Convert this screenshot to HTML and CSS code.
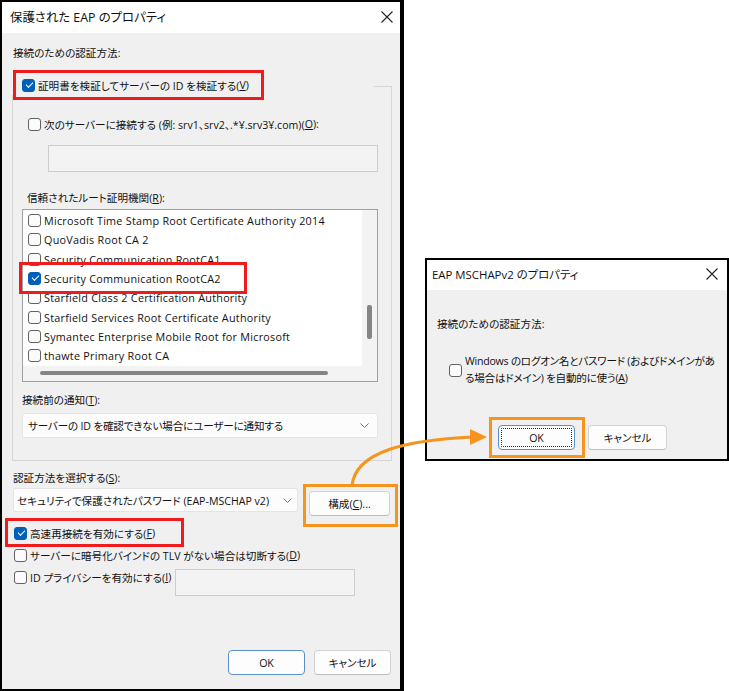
FILE: index.html
```html
<!DOCTYPE html>
<html lang="ja">
<head>
    <meta charset="UTF-8">
    <title>保護された EAP のプロパティ</title>
    <link rel="stylesheet" href="styles.css">
</head>
<body>
<div class="canvas">

    <!-- PEAP properties window -->
    <div class="window peap">
        <div class="titlebar">
            <span class="title">保護された EAP のプロパティ</span>
            <svg class="close" width="12" height="12" viewBox="0 0 12 12"><path d="M0.5 0.5 L11.5 11.5 M11.5 0.5 L0.5 11.5" stroke="#222" stroke-width="1.1"/></svg>
        </div>
        <div class="client">
            <div class="label first-label">接続のための認証方法:</div>

            <div class="group">
                <div class="legend"><span class="cb checked"></span>証明書を検証してサーバーの ID を検証する(<u>V</u>)</div>
                <div class="check-row server-row"><span class="cb"></span>次のサーバーに接続する (例: srv1、srv2、.*¥.srv3¥.com)(<u>O</u>):</div>
                <div class="textbox server-box"></div>

                <div class="label ca-label">信頼されたルート証明機関(<u>R</u>):</div>
                <div class="listbox">
                    <div class="list-items">
                        <div class="item"><span class="cb"></span>Microsoft Time Stamp Root Certificate Authority 2014</div>
                        <div class="item"><span class="cb"></span>QuoVadis Root CA 2</div>
                        <div class="item"><span class="cb"></span>Security Communication RootCA1</div>
                        <div class="item"><span class="cb checked"></span>Security Communication RootCA2</div>
                        <div class="item"><span class="cb"></span>Starfield Class 2 Certification Authority</div>
                        <div class="item"><span class="cb"></span>Starfield Services Root Certificate Authority</div>
                        <div class="item"><span class="cb"></span>Symantec Enterprise Mobile Root for Microsoft</div>
                        <div class="item"><span class="cb"></span>thawte Primary Root CA</div>
                    </div>
                    <div class="vscroll"><div class="thumb"></div></div>
                    <div class="hscroll"><div class="thumb"></div></div>
                    <div class="corner"></div>
                </div>

                <div class="label notify-label">接続前の通知(<u>T</u>):</div>
                <div class="combo notify-combo">
                    <span>サーバーの ID を確認できない場合にユーザーに通知する</span>
                    <svg width="9" height="5" viewBox="0 0 9 5"><path d="M0.5 0.5 L4.5 4.5 L8.5 0.5" fill="none" stroke="#777" stroke-width="1"/></svg>
                </div>
            </div>

            <div class="label auth-label">認証方法を選択する(<u>S</u>):</div>
            <div class="auth-row">
                <div class="combo auth-combo">
                    <span>セキュリティで保護されたパスワード (EAP-MSCHAP v2)</span>
                    <svg width="9" height="5" viewBox="0 0 9 5"><path d="M0.5 0.5 L4.5 4.5 L8.5 0.5" fill="none" stroke="#777" stroke-width="1"/></svg>
                </div>
                <div class="button config-btn">構成(<u>C</u>)...</div>
            </div>

            <div class="check-row opt-row"><span class="cb checked"></span>高速再接続を有効にする(<u>F</u>)</div>
            <div class="check-row opt-row"><span class="cb"></span>サーバーに暗号化バインドの TLV がない場合は切断する(<u>D</u>)</div>
            <div class="privacy-row">
                <div class="check-row opt-row privacy-label"><span class="cb"></span>ID プライバシーを有効にする(<u>I</u>)</div>
                <div class="textbox privacy-box"></div>
            </div>

            <div class="footer">
                <div class="button default">OK</div>
                <div class="button">キャンセル</div>
            </div>
        </div>
    </div>

    <!-- MSCHAPv2 properties window -->
    <div class="window mschap">
        <div class="titlebar">
            <span class="title">EAP MSCHAPv2 のプロパティ</span>
            <svg class="close" width="12" height="12" viewBox="0 0 12 12"><path d="M0.5 0.5 L11.5 11.5 M11.5 0.5 L0.5 11.5" stroke="#222" stroke-width="1.1"/></svg>
        </div>
        <div class="client">
            <div class="label mschap-label">接続のための認証方法:</div>
            <div class="check-row logon-row"><span class="cb"></span><span class="logon-text">Windows のログオン名とパスワード (およびドメインがあ<br>る場合はドメイン) を自動的に使う(<u>A</u>)</span></div>
            <div class="mschap-buttons">
                <div class="button default focused">OK</div>
                <div class="button">キャンセル</div>
            </div>
        </div>
    </div>

    <!-- annotation marks -->
    <div class="mark red" style="left:13px; top:70px; width:251px; height:30px;"></div>
    <div class="mark red" style="left:19px; top:262px; width:228px; height:32px;"></div>
    <div class="mark red" style="left:5px; top:518px; width:179px; height:29px;"></div>
    <div class="mark orange" style="left:303px; top:484px; width:95px; height:43px;"></div>
    <div class="mark orange" style="left:489px; top:417px; width:96px; height:41px;"></div>

    <svg class="arrow" width="729" height="691" viewBox="0 0 729 691">
        <path d="M352 486 C355 451 408 440 473 437" fill="none" stroke="#f7941d" stroke-width="3"/>
        <path d="M470 429 L487 437 L470 445 Z" fill="#f7941d"/>
    </svg>
</div>
</body>
</html>
```

FILE: styles.css
```css
* {
    box-sizing: border-box;
}

body {
    margin: 0;
    background: #fff;
    font-family: "Open Sans", "Noto Sans CJK JP", sans-serif;
    font-size: 10.6px;
    color: #111;
    font-feature-settings: "palt";
}

u {
    text-underline-offset: 1px;
}

.canvas {
    position: relative;
    width: 729px;
    height: 691px;
    overflow: hidden;
}

/* windows */
.window {
    position: absolute;
    display: flex;
    flex-direction: column;
    border: 2px solid #000;
    background: #f0f0f0;
}

.peap {
    left: 0;
    top: 0;
    width: 404px;
    height: 691px;
    border-right-width: 4px;
}

.mschap {
    left: 425px;
    top: 258px;
    width: 304px;
    height: 203px;
}

.titlebar {
    flex: none;
    display: flex;
    align-items: center;
    justify-content: space-between;
    background: #fff;
}

.peap .titlebar {
    height: 31px;
    padding: 0 7px 0 8px;
}

.mschap .titlebar {
    height: 30px;
    padding: 0 9px 0 5px;
}

.title {
    font-size: 11.4px;
    margin-top: -2px;
}

.peap .title {
    font-size: 12.4px;
}

.close {
    display: block;
    margin-top: -2px;
}

.client {
    flex: 1;
    display: flex;
    flex-direction: column;
}

.peap .client {
    padding: 11px 9px 14px 11px;
}

.label {
    height: 18px;
    line-height: 18px;
    white-space: nowrap;
}

/* checkboxes */
.check-row {
    display: flex;
    align-items: center;
    white-space: nowrap;
}

.cb {
    position: relative;
    flex: none;
    width: 13px;
    height: 13px;
    margin-right: 3px;
    border: 1px solid #626262;
    border-radius: 3px;
    background: #fbfbfb;
}

.cb.checked {
    border-color: #005fb8;
    background: #005fb8;
}

.cb.checked::after {
    content: "";
    position: absolute;
    left: 3px;
    top: 2px;
    width: 6px;
    height: 3px;
    border-left: 1.3px solid #fff;
    border-bottom: 1.3px solid #fff;
    transform: rotate(-45deg);
}

/* group box */
.group {
    margin: 24px -1px 0 -1px;
    border: 1px solid #d6d6d6;
    padding: 0 13px 22px 9px;
}

.legend {
    display: flex;
    align-items: center;
    width: 362px;
    height: 20px;
    margin: -12px 0 0 -10px;
    padding-left: 10px;
    background: #f0f0f0;
    white-space: nowrap;
}

.server-row {
    height: 20px;
    margin: 19px 0 0 6px;
}

.textbox {
    border: 1px solid #cdcdcd;
    background: #f3f3f3;
}

.server-box {
    height: 27px;
    margin: 11px 0 0 26px;
}

.ca-label {
    margin: 17px 0 0 5px;
}

/* list of certificates */
.listbox {
    display: grid;
    grid-template-columns: 1fr 15px;
    grid-template-rows: 1fr 15px;
    height: 173px;
    margin-top: 2px;
    border: 1px solid #a0a0a0;
}

.list-items {
    overflow: hidden;
    background: #fff;
    padding: 1px 0 0 5px;
}

.item {
    display: flex;
    align-items: center;
    height: 19.3px;
    font-size: 10.8px;
    letter-spacing: 0.25px;
    white-space: nowrap;
}

.vscroll,
.hscroll,
.corner {
    background: #f3f3f3;
}

.vscroll {
    padding: 95px 0 0 5px;
}

.vscroll .thumb {
    width: 5px;
    height: 34px;
    border-radius: 2px;
    background: #858585;
}

.hscroll {
    padding: 5px 0 0 17px;
}

.hscroll .thumb {
    width: 288px;
    height: 4px;
    border-radius: 2px;
    background: #858585;
}

.notify-label {
    margin-top: 9px;
}

.combo {
    display: flex;
    align-items: center;
    justify-content: space-between;
    background: #fcfcfc;
    border: 1px solid #e4e4e4;
    border-radius: 2px;
    white-space: nowrap;
}

.notify-combo {
    height: 25px;
    margin-top: 4px;
    padding: 0 8px 0 5px;
    letter-spacing: -0.2px;
}

.auth-label {
    margin-top: 8px;
}

.auth-row {
    display: flex;
    align-items: flex-start;
    gap: 11px;
}

.auth-combo {
    width: 285px;
    height: 24px;
    margin-top: 1px;
    padding: 0 5px 0 3px;
}

/* buttons */
.button {
    display: flex;
    align-items: center;
    justify-content: center;
    width: 77px;
    height: 25px;
    background: #fdfdfd;
    border: 1px solid #d3d3d3;
    border-bottom-color: #bdbdbd;
    border-radius: 4px;
    white-space: nowrap;
}

.button.default {
    border-color: #5b8fc7;
}

.button.focused {
    outline: 1px dotted #333;
    outline-offset: -4px;
}

.config-btn {
    width: 81px;
    margin-top: 4px;
}

.opt-row {
    height: 22px;
    margin-left: 1px;
}

.auth-row + .opt-row {
    margin-top: 6px;
}

.privacy-row {
    display: flex;
    align-items: flex-start;
}

.privacy-label {
    width: 161px;
}

.privacy-box {
    width: 180px;
    height: 27px;
    margin-top: 3px;
}

.footer {
    display: flex;
    justify-content: flex-end;
    gap: 9px;
    margin-top: auto;
}

/* MSCHAPv2 window */
.mschap .client {
    padding: 25px 0 0 10px;
}

.logon-row {
    margin: 20px 0 0 12px;
}

.logon-text {
    line-height: 17px;
    letter-spacing: -0.25px;
}

.mschap-buttons {
    display: flex;
    gap: 13px;
    margin: 38px 0 0 61px;
}

.mschap-buttons .button + .button {
    width: 79px;
}

/* annotation marks */
.mark {
    position: absolute;
    border: 3px solid;
}

.mark.red {
    border-color: #ee1c1c;
}

.mark.orange {
    border-color: #f7941d;
}

.arrow {
    position: absolute;
    left: 0;
    top: 0;
}
```
